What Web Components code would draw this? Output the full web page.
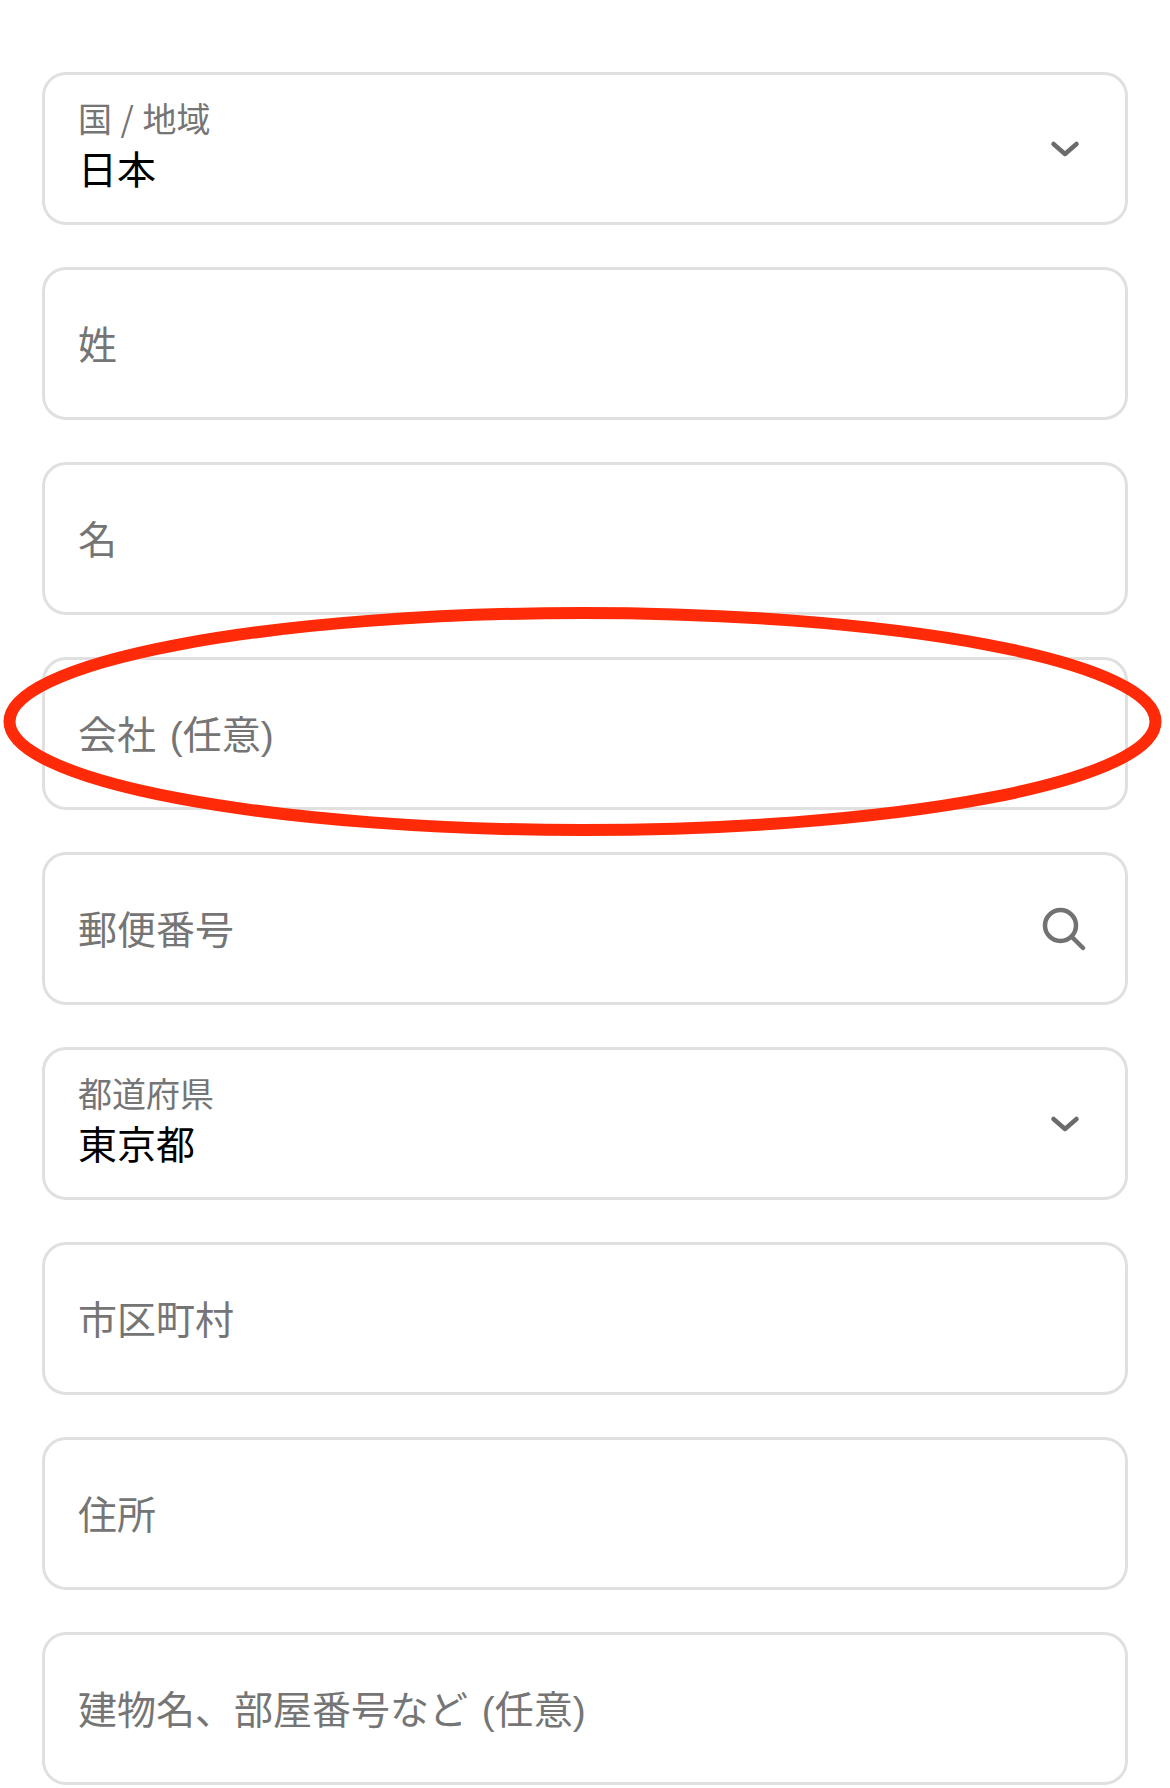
<!DOCTYPE html>
<html lang="ja">
<head>
<meta charset="utf-8">
<title>住所フォーム</title>
<style>
  html, body { margin: 0; background: #fff; }
  body { font-family: "Noto Sans CJK JP", "Noto Sans", sans-serif; }
</style>
</head>
<body>
<address-form>
  <form-field>国 / 地域<span slot="value">日本</span><span slot="icon"><icon-chevron></icon-chevron></span></form-field>
  <form-field>姓</form-field>
  <form-field>名</form-field>
  <form-field>会社 (任意)</form-field>
  <form-field>郵便番号<span slot="icon"><icon-search></icon-search></span></form-field>
  <form-field>都道府県<span slot="value">東京都</span><span slot="icon"><icon-chevron></icon-chevron></span></form-field>
  <form-field>市区町村</form-field>
  <form-field>住所</form-field>
  <form-field>建物名、部屋番号など (任意)</form-field>
  <red-ellipse slot="mark"></red-ellipse>
</address-form>

<script>
class AddressForm extends HTMLElement {
  connectedCallback() {
    this.attachShadow({ mode: 'open' });
    this.shadowRoot.innerHTML = `
      <style>
        :host {
          display: block;
          position: relative;
          height: 1788px;
          overflow: hidden;
          box-sizing: border-box;
          padding: 72px 42px 0 42px;
        }
        .list {
          display: flex;
          flex-direction: column;
          gap: 42px;
        }
      </style>
      <div class="list"><slot></slot></div>
      <slot name="mark"></slot>
    `;
  }
}

class FormField extends HTMLElement {
  connectedCallback() {
    this.attachShadow({ mode: 'open' });
    const hasValue = !!this.querySelector('[slot="value"]');
    this.shadowRoot.innerHTML = `
      <style>
        :host {
          display: flex;
          align-items: center;
          justify-content: space-between;
          box-sizing: border-box;
          height: 153px;
          padding: 0 40px 0 33px;
          border: 3px solid #e0e0e0;
          border-radius: 24px;
          background: #fff;
          color: #757575;
          font-family: "Noto Sans CJK JP", "Noto Sans", sans-serif;
        }
        .text { display: flex; flex-direction: column; min-width: 0; padding-top: 4px; }
        .label { font-family: "Liberation Sans", "Noto Sans CJK JP", sans-serif; font-size: 39px; line-height: 48px; word-spacing: 3px; }
        .has-value { padding-top: 0; padding-bottom: 7px; }
        .has-value .label { font-family: "Noto Sans CJK JP", "Noto Sans", sans-serif; font-size: 34px; line-height: 40px; margin-bottom: 4px; word-spacing: 1px; }
        .value { color: #000; font-size: 39px; line-height: 50px; }
        .icon { display: flex; }
      </style>
      <div class="text ${hasValue ? 'has-value' : ''}">
        <div class="label"><slot></slot></div>
        ${hasValue ? '<div class="value"><slot name="value"></slot></div>' : ''}
      </div>
      <div class="icon"><slot name="icon"></slot></div>
    `;
  }
}

class IconChevron extends HTMLElement {
  connectedCallback() {
    this.attachShadow({ mode: 'open' });
    this.shadowRoot.innerHTML = `
      <style>:host { display: block; width: 40px; height: 40px; } svg { display: block; }</style>
      <svg width="40" height="40" viewBox="0 0 40 40" fill="none" stroke="#6b6b6b" stroke-width="4.5" stroke-linecap="round" stroke-linejoin="round">
        <path d="M8.5 15 L20 25 L31.5 15"/>
      </svg>
    `;
  }
}

class IconSearch extends HTMLElement {
  connectedCallback() {
    this.attachShadow({ mode: 'open' });
    this.shadowRoot.innerHTML = `
      <style>:host { display: block; width: 44px; height: 44px; margin-right: -1px; } svg { display: block; }</style>
      <svg width="44" height="44" viewBox="0 0 44 44" fill="none" stroke="#727272" stroke-width="4.5" stroke-linecap="round">
        <circle cx="18.5" cy="18.5" r="15.5"/>
        <path d="M30 30 L41 41"/>
      </svg>
    `;
  }
}

class RedEllipse extends HTMLElement {
  connectedCallback() {
    this.attachShadow({ mode: 'open' });
    this.shadowRoot.innerHTML = `
      <style>
        :host { position: absolute; left: 0; top: 600px; width: 1170px; height: 245px; pointer-events: none; }
        svg { display: block; }
      </style>
      <svg width="1170" height="245" viewBox="0 0 1170 245" fill="none">
        <ellipse cx="582.5" cy="121.5" rx="573" ry="108.5" stroke="#ff2a08" stroke-width="12"/>
      </svg>
    `;
  }
}

customElements.define('address-form', AddressForm);
customElements.define('form-field', FormField);
customElements.define('icon-chevron', IconChevron);
customElements.define('icon-search', IconSearch);
customElements.define('red-ellipse', RedEllipse);
</script>
</body>
</html>
